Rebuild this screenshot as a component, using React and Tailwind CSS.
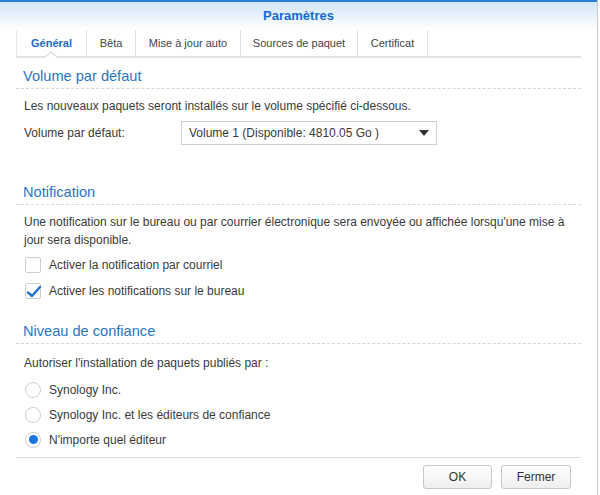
import React from "react";

const font = { fontFamily: '"Liberation Sans", Arial, sans-serif' };

function Heading({ children, mt }) {
  return (
    <div className={`${mt} mx-4 border-b border-dashed border-[#d6d6d6] pb-[3px] pl-[7px]`}>
      <div className="h-[18px] leading-[18px] text-[14.6px] text-[#2a75c4]">{children}</div>
    </div>
  );
}

function Checkbox({ checked, label }) {
  return (
    <div className="flex h-[26px] items-center pl-[25px]">
      <div className="relative h-[16px] w-[16px] rounded-[2px] border border-[#cfcfcf] bg-white">
        {checked && (
          <svg className="absolute left-[-1px] top-[-1px]" width="18" height="18" viewBox="0 0 18 18">
            <path d="M3 9.5 L7 13 L15 4" fill="none" stroke="#1f74cf" strokeWidth="2.4" strokeLinecap="round" strokeLinejoin="round" />
          </svg>
        )}
      </div>
      <span className="ml-[8px] text-[12px] text-[#3a3a3a]">{label}</span>
    </div>
  );
}

function Radio({ checked, label }) {
  return (
    <div className="flex h-[25px] items-center pl-[25px]">
      <div className="flex h-[16px] w-[16px] items-center justify-center rounded-full border border-[#cfcfcf] bg-white">
        {checked && <div className="h-[9px] w-[9px] rounded-full bg-[#1c78e0]" />}
      </div>
      <span className="ml-[8px] text-[12px] text-[#3a3a3a]">{label}</span>
    </div>
  );
}

export default function App() {
  const tabs = [
    { label: "Général", active: true, w: "w-[70px]" },
    { label: "Bêta", w: "w-[49px]" },
    { label: "Mise à jour auto", w: "w-[105px]" },
    { label: "Sources de paquet", w: "w-[117px]" },
    { label: "Certificat", w: "w-[70px]" },
  ];
  return (
    <div className="h-[495px] w-[600px] overflow-hidden bg-white" style={font}>
      <div className="h-full w-[598px] border-r border-[#c9c9c9] bg-white">
        <div className="h-[2px] bg-[#2b7ed3]" />
        <div className="flex h-[28px] items-center justify-center bg-gradient-to-b from-[#d2e5f7] to-white">
          <span className="text-[13px] font-bold text-[#136bd0]">Paramètres</span>
        </div>
        <div className="relative mx-4 flex h-[28px] border-b-2 border-[#e2e2e2]">
          <div className="flex h-[26px] border-l border-[#e6e6e6]">
            {tabs.map((t) => (
              <div
                key={t.label}
                className={`${t.w} flex h-[26px] items-center justify-center border-r border-[#e2e2e2] text-[11px] ${
                  t.active ? "font-bold text-[#1a6bc4]" : "text-[#444]"
                }`}
              >
                {t.label}
              </div>
            ))}
          </div>
          <svg className="absolute left-[28px] top-[21px]" width="14" height="8" viewBox="0 0 14 8">
            <path d="M0 7 L7 1 L14 7" fill="white" stroke="#e2e2e2" strokeWidth="1.5" />
            <rect x="0" y="7" width="14" height="2" fill="white" />
          </svg>
        </div>

        <Heading mt="mt-[9px]">Volume par défaut</Heading>
        <div className="mt-[8px] h-[18px] pl-[24px] text-[12px] leading-[18px] text-[#3a3a3a]">
          Les nouveaux paquets seront installés sur le volume spécifié ci-dessous.
        </div>
        <div className="mt-[6px] flex h-[24px] items-center pl-[24px]">
          <span className="w-[157px] text-[12px] text-[#3a3a3a]">Volume par défaut:</span>
          <div className="flex h-[24px] w-[256px] items-center justify-between border border-[#cfcfcf] bg-white pl-[7px] pr-[7px]">
            <span className="text-[12px] text-[#3a3a3a]">Volume 1 (Disponible: 4810.05 Go )</span>
            <svg width="10" height="6" viewBox="0 0 10 6">
              <path d="M0 0 L10 0 L5 6 Z" fill="#333" />
            </svg>
          </div>
        </div>

        <Heading mt="mt-[38px]">Notification</Heading>
        <div className="mt-[8px] pl-[24px] pr-[18px] text-[12px] leading-[18px] text-[#3a3a3a]">
          Une notification sur le bureau ou par courrier électronique sera envoyée ou affichée lorsqu'une mise à jour sera disponible.
        </div>
        <div className="mt-[3px]">
          <Checkbox label="Activer la notification par courriel" />
          <Checkbox checked label="Activer les notifications sur le bureau" />
        </div>

        <Heading mt="mt-[18px]">Niveau de confiance</Heading>
        <div className="mt-[10px] h-[18px] pl-[24px] text-[12px] leading-[18px] text-[#3a3a3a]">
          Autoriser l'installation de paquets publiés par :
        </div>
        <div className="mt-[5px]">
          <Radio label="Synology Inc." />
          <Radio label="Synology Inc. et les éditeurs de confiance" />
          <Radio checked label="N'importe quel éditeur" />
        </div>

        <div className="mx-4 mt-[5px] border-t border-[#dcdcdc]" />
        <div className="flex justify-end gap-[9px] pr-[26px] pt-[7px]">
          <button className="h-[24px] w-[69px] rounded-[3px] border border-[#c8c8c8] bg-gradient-to-b from-white to-[#eeeeee] text-[12px] text-[#333]">
            OK
          </button>
          <button className="h-[24px] w-[70px] rounded-[3px] border border-[#c8c8c8] bg-gradient-to-b from-white to-[#eeeeee] text-[12px] text-[#333]">
            Fermer
          </button>
        </div>
      </div>
    </div>
  );
}
